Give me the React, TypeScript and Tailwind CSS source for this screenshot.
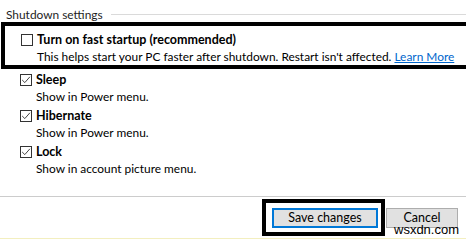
import React from "react";

function CheckBox({ checked }: { checked: boolean }) {
  return (
    <div className="w-[12px] h-[12px] border border-[#333333] bg-white shrink-0 flex items-center justify-center">
      {checked && (
        <svg width="10" height="10" viewBox="0 0 10 10">
          <path d="M1.2 5 L3.8 7.6 L8.9 1.8" fill="none" stroke="#444444" strokeWidth="1" />
        </svg>
      )}
    </div>
  );
}

function Option({ title, desc, checked, link }: { title: string; desc: string; checked: boolean; link?: string }) {
  return (
    <div className="flex flex-col">
      <div className="flex items-center gap-[4px] h-[17px]">
        <CheckBox checked={checked} />
        <span className="font-bold text-[12.5px] text-black">{title}</span>
      </div>
      <div className="pl-[16px] h-[17px] leading-[17px] whitespace-nowrap text-black">
        {desc}
        {link && (
          <>
            {" "}
            <span className="text-[#0066cc] underline">{link}</span>
          </>
        )}
      </div>
    </div>
  );
}

export default function App() {
  return (
    <div
      className="relative w-[466px] h-[240px] bg-white overflow-hidden text-[11.9px] leading-[17px] text-black"
      style={{ fontFamily: 'Lato, "Noto Sans", sans-serif' }}
    >
      <div className="flex items-center pt-[6px] h-[22px]">
        <span className="pl-[6px] text-[#1e1e1e] whitespace-nowrap">Shutdown settings</span>
        <div className="flex-1 h-px bg-[#dadada] ml-[8px]" />
      </div>

      <div className="ml-[1px] w-[470px] h-[47px] border-4 border-black pl-[16px] pt-[5px]">
        <Option
          checked={false}
          title="Turn on fast startup (recommended)"
          desc="This helps start your PC faster after shutdown. Restart isn't affected."
          link="Learn More"
        />
      </div>

      <div className="flex flex-col gap-[2px] pl-[20px] pt-[2px]">
        <Option checked title="Sleep" desc="Show in Power menu." />
        <Option checked title="Hibernate" desc="Show in Power menu." />
        <Option checked title="Lock" desc="Show in account picture menu." />
      </div>

      <div className="absolute left-0 right-0 top-[196px] h-px bg-[#cccccc]" />
      <div className="absolute left-0 right-0 bottom-[1px] h-px bg-[#f3efbf]" />

      <div className="absolute top-[199px] left-[262px] flex items-center">
        <div className="border-4 border-black pt-[5px] pb-[4px] pl-[6px] pr-[3px]">
          <button className="w-[106px] h-[20px] border-2 border-[#0078d7] bg-[#e1e1e1] text-[12.5px] leading-[16px] text-black">
            Save changes
          </button>
        </div>
        <button className="ml-[1px] w-[72px] h-[20px] border border-[#adadad] bg-[#e1e1e1] text-[12.5px] leading-[18px] text-black">
          Cancel
        </button>
      </div>

      <div
        className="absolute left-[394px] top-[222px] text-[13px] leading-[15px] text-black"
        style={{ fontFamily: '"Liberation Sans", sans-serif' }}
      >
        wsxdn.com
      </div>
    </div>
  );
}
